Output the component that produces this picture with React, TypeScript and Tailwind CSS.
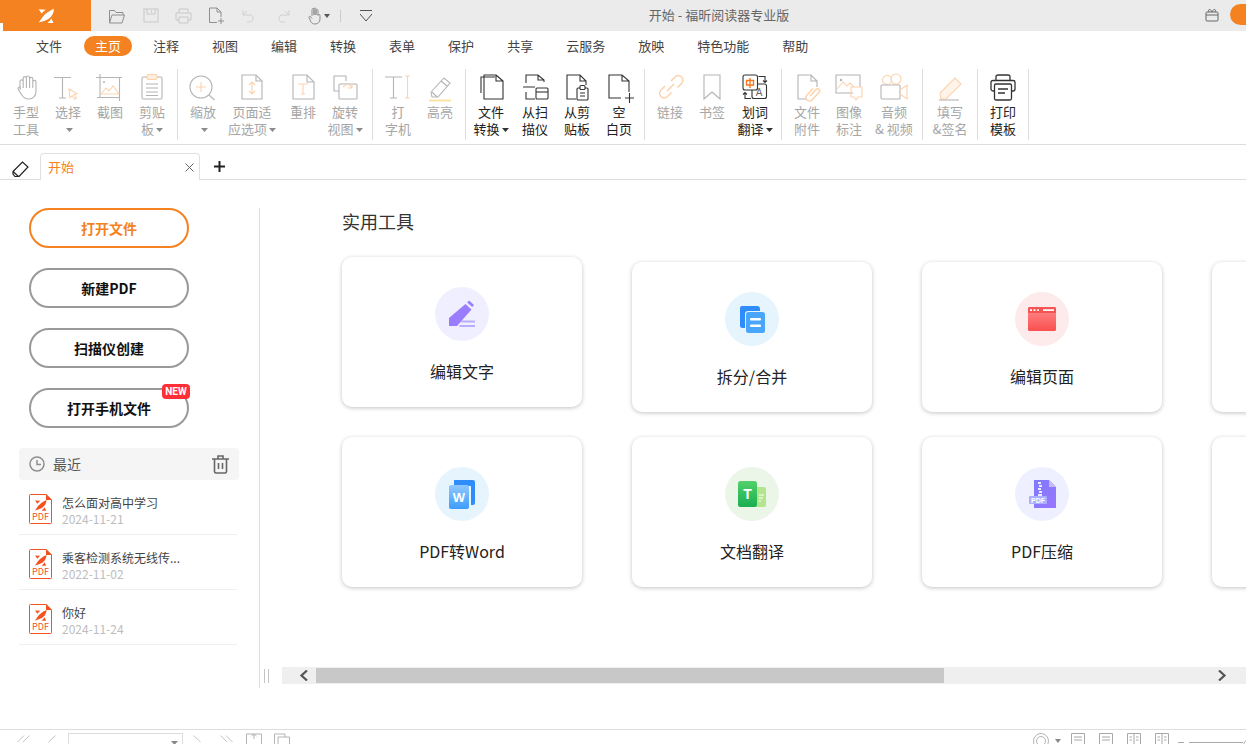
import React from "react";

const G = "#b4b4b4";
const O = "#fcd3ae";
const D = "#333333";

type SP = { children: React.ReactNode; w?: number; h?: number; vb?: string };
const S = ({ children, w = 28, h = 28, vb }: SP) => (
  <svg width={w} height={h} viewBox={vb || `0 0 ${w} ${h}`} fill="none" strokeWidth={1.1} className="overflow-visible shrink-0">
    {children}
  </svg>
);

const Fox = ({ fill = "#fff" }: { fill?: string }) => (
  <g fill={fill}>
    <path d="M.5 14.500C3.500 12.500 3.500 6.500 16 .8 15.500 8.500 11 12.500 .5 14.500Z" />
    <path d="M.8 1.200L7.800 1.800C6 3 4.800 4.200 3.700 5.800Z" />
    <path d="M9.500 14.900H15.500L13.400 10.400C12.500 12 11.200 13.500 9.500 14.900Z" />
  </g>
);

const Ic: Record<string, React.ReactNode> = {
  hand: (
    <S><path d="M8 16V8.500a1.600 1.600 0 0 1 3.200 0V5.200a1.600 1.600 0 0 1 3.200 0v-.6a1.600 1.600 0 0 1 3.200 0v1.400a1.600 1.600 0 0 1 3.200 0V9a1.600 1.600 0 0 1 3.200 0v9.500c0 4.400-3 7.500-7.200 7.500-3.400 0-5.200-1.200-7-4l-3.600-5.600c-1-1.800 1.200-3 2.400-1.600L8 16.500M11.200 8v7M14.400 5v10M17.600 5v10M20.800 8v7" stroke={G} /></S>
  ),
  select: (
    <S><path d="M0 4.500H17M8.500 4.500V25M5 25H12" stroke={G} /><path d="M15 16l8 4.500-3 1 2.500 3.500-2 1.200-2.200-3.500-2.300 2Z" stroke={O} /></S>
  ),
  shot: (
    <S><path d="M0 4.500H26M4 1V25M1 24.500H24M23.500 4V28" stroke={G} /><path d="M5 21l5-6 3 3 4-5 6 8M5 21H23" stroke={O} /><circle cx="8" cy="9" r="1" fill={G} /></S>
  ),
  clip: (
    <S><rect x="4" y="4" width="20" height="22" rx="1.500" stroke={G} /><rect x="9" y="1.500" width="10" height="5" rx="2" stroke={O} fill="#fdeedd" /><path d="M8 11H20M8 15H20M8 19H20M8 22.500H20" stroke={G} /></S>
  ),
  zoom: (
    <S><circle cx="12" cy="14" r="11" stroke={G} /><path d="M20 22l5.500 5" stroke={G} /><path d="M7 14H17M12 9V19" stroke={O} /></S>
  ),
  fit: (
    <S><path d="M4 2H18L24 8V26H4Z" stroke={G} /><path d="M18 2V8H24" stroke={G} /><path d="M14 9V21M11 12l3-3 3 3M11 18l3 3 3-3" stroke={O} /></S>
  ),
  reflow: (
    <S><path d="M4 2H18L25 9V26H4Z" stroke={G} /><path d="M18 2V9H25" stroke={G} /><path d="M9 11H19M14 11V21M12 21H16" stroke={O} /></S>
  ),
  rotate: (
    <S><path d="M15 8V3H3V18H8" stroke={G} /><rect x="8" y="11" width="18" height="15" rx="1" stroke={G} /><path d="M12 14c4-4 7-3 9 1M21 11v4h-4" stroke={O} /></S>
  ),
  type: (
    <S><path d="M1 4H18M9.500 4V25M6 25H13" stroke={G} /><path d="M21 3H26M23.500 3V25M21 25H26" stroke={O} /></S>
  ),
  mark: (
    <S><path d="M5 19L18 5l6 5-12 14H6Z" stroke={G} /><path d="M15 8l6 5" stroke={G} /><path d="M6 19l5 5" stroke={G} /><path d="M3 27.500H25" stroke="#fde2a4" strokeWidth={2} /></S>
  ),
  conv: (
    <S><path d="M4 20V4H18" stroke={D} fill="none" /><path d="M7 26V2H19L26 8V26ZM19 2V8H26" stroke={D} strokeLinejoin="round" /></S>
  ),
  scan: (
    <S><path d="M5 10V2H17L23 7V9M17 2V7H23M5 19V26H14M2 14H14" stroke={D} /><rect x="15" y="15" width="12" height="11" rx="1" stroke={D} /><path d="M15 19H27" stroke={D} /></S>
  ),
  paste: (
    <S><path d="M13 26H4V2H17L23 8V12M17 2V8H23" stroke={D} /><rect x="14" y="15" width="11" height="12" rx="1" stroke={D} /><rect x="17" y="12.500" width="5" height="4" rx="1" stroke={D} fill="#fff" /><path d="M17 20H22M17 23H22" stroke={D} /></S>
  ),
  blank: (
    <S><path d="M16 25H4V2H17L24 8V19M17 2V8H24" stroke={D} /><path d="M20 25H29M24.500 20V30" stroke={D} /></S>
  ),
  link: (
    <S><path d="M11 18L18 11M9 13l-4 4a4.500 4.500 0 0 0 6.500 6.500l4-4M15 8l4-4a4.500 4.500 0 0 1 6.500 6.500l-4 4" stroke={O} strokeWidth={1.600} /></S>
  ),
  book: (
    <S><path d="M6 2H22V26L14 19 6 26Z" stroke={G} /></S>
  ),
  trans: (
    <S>
      <rect x="11" y="11" width="14.500" height="14.500" rx="2" stroke={D} fill="#fff" />
      <rect x="2" y="2" width="14.500" height="15" rx="2" stroke={D} fill="#fff" />
      <path d="M5.500 7.500H12.500V12H5.500ZM9 5V15" stroke="#f5761a" strokeWidth={1.300} />
      <text x="18" y="23" textAnchor="middle" fontSize="10" fill="#666666" fontFamily="Liberation Sans, sans-serif">A</text>
      <path d="M17.500 3.500H24V9.500M22 7.500L24 9.500 26 7.500M10 25.500H4V19.500M2 21.500L4 19.500 6 21.500" stroke={D} />
    </S>
  ),
  attach: (
    <S><path d="M14 26H5V2H18L24 8V14M18 2V8H24" stroke={G} /><path d="M17 23l6-6.500a2 2 0 0 1 3 3l-7 7.500a3.500 3.500 0 0 1-5-5l6-6.500" stroke={O} strokeWidth={1.600} /></S>
  ),
  image: (
    <S><path d="M18 20H1V2H25V14" stroke={G} /><circle cx="6" cy="7" r="1.200" fill={G} /><path d="M2 16l6-7 4 4 3-3 4 4" stroke={O} /><path d="M16 14H27V24H23L21 27 19 24H16Z" stroke={O} /></S>
  ),
  video: (
    <S><circle cx="7" cy="7" r="4.500" stroke={O} /><circle cx="16" cy="6" r="5" stroke={O} /><rect x="1" y="12" width="19" height="14" rx="1" stroke={G} /><path d="M20 17l7-5V26l-7-5" stroke={O} /></S>
  ),
  sign: (
    <S><path d="M4 20L19 5l6 6L10 26H5Z" stroke={O} fill="#fff4ea" /><path d="M3 27H23" stroke={G} /></S>
  ),
  print: (
    <S><path d="M7 8V3.500C7 2.500 8 2 9 2H19C20 2 21 2.500 21 3.500V8" stroke={D} strokeWidth={1.300} /><path d="M7 18H4C3 18 2 17 2 16V9C2 8 3 7.500 4 7.500H24C25 7.500 26 8 26 9V16C26 17 25 18 24 18H21" stroke={D} strokeWidth={1.300} /><rect x="5.500" y="11" width="17" height="16" rx="1.500" stroke={D} strokeWidth={1.300} fill="#fff" /><path d="M9 16H19M9 20H16" stroke={D} strokeWidth={1.300} /></S>
  ),
};

const Caret = ({ c = "#8c8c8c" }: { c?: string }) => (
  <svg width="7" height="4" viewBox="0 0 7 4" className="inline-block ml-[2px] align-middle">
    <path d="M0 0H7L3.500 4Z" fill={c} />
  </svg>
);

const Item = ({ w, icon, a, b, dark, caret }: { w: string; icon: string; a: string; b?: string; dark?: boolean; caret?: boolean }) => (
  <div className={`${w} shrink-0 flex flex-col items-center pt-[12px] text-[13px] leading-[17px] whitespace-nowrap ${dark ? "text-[#222222]" : "text-[#a6a6a6]"}`}>
    <div className="h-[28px] mb-[2px]">{Ic[icon]}</div>
    <div>{a}</div>
    <div className="h-[17px]">
      {b}
      {caret && <Caret c={dark ? "#333333" : "#8c8c8c"} />}
    </div>
  </div>
);

const Sep = ({ ml }: { ml: string }) => <div className={`${ml} w-px h-[71px] mt-[8px] bg-[#dddddd] shrink-0`} />;

const Tool = ({ color, icon, label, lift }: { color: string; icon: React.ReactNode; label: string; lift?: boolean }) => (
  <div className={`h-[150px] bg-white rounded-[10px] shadow-[0_1px_4px_rgba(0,0,0,0.24)] flex flex-col items-center pt-[30px] ${lift ? "-translate-y-[5px]" : ""}`}>
    <div className={`${color} w-[54px] h-[54px] rounded-full flex items-center justify-center`}>{icon}</div>
    <div className="mt-[18px] text-[16px] leading-[24px] text-[#222222]">{label}</div>
  </div>
);

const FileRow = ({ name, date }: { name: string; date: string }) => (
  <div className="w-[218px] h-[55px] ml-[19px] pl-[10px] pt-[14px] border-b border-[#eeeeee] flex gap-[10px]">
    <div className="relative w-[23px] h-[30px] shrink-0">
      <svg width="23" height="30" viewBox="0 0 23 30" fill="none">
        <path d="M1.500.5H17L22.500 6V28.500a1 1 0 0 1-1 1H1.500a1 1 0 0 1-1-1V1.500a1 1 0 0 1 1-1Z" stroke="#f4511e" />
        <path d="M17 0L23 6H17Z" fill="#f4511e" />
        <g transform="translate(5.500 5.500) scale(.75)"><Fox fill="#f4511e" /></g>
      </svg>
      <span className="absolute left-0 right-0 top-[17px] text-center text-[9px] leading-[11px] text-[#f4511e]">PDF</span>
    </div>
    <div>
      <div className="text-[12px] leading-[17px] text-[#444444] whitespace-nowrap">{name}</div>
      <div className="text-[12px] leading-[15px] text-[#bdbdbd]">{date}</div>
    </div>
  </div>
);

const PillBtn = ({ label, active, children }: { label: string; active?: boolean; children?: React.ReactNode }) => (
  <div className={`relative w-[160px] h-[40px] rounded-full border-2 flex items-center justify-center text-[14px] font-bold ${active ? "border-[#f58220] text-[#f58220]" : "border-[#999999] text-[#111111]"}`}>
    {label}
    {children}
  </div>
);

const TitleIcons = () => (
  <div className="flex items-center h-full text-[#9a9a9a]">
    <svg width="18" height="16" viewBox="0 0 18 16" fill="none" stroke="#8e8e8e" className="ml-[17px]"><path d="M1.500 15V2.500h5l1.500 2h7V7M1.500 15h12.500l2.500-8H4Z" /></svg>
    <svg width="16" height="15" viewBox="0 0 16 15" fill="none" stroke="#c8c8c8" className="ml-[17px]"><rect x="1" y="1" width="14" height="13" /><path d="M4 1V6H12V1M8.500 2.500V4.500" /></svg>
    <svg width="17" height="16" viewBox="0 0 17 16" fill="none" stroke="#c8c8c8" className="ml-[16px]"><path d="M4 5V1H13V5M4 12H1V5H16V12H13M4 9H13V15H4Z" /></svg>
    <svg width="17" height="17" viewBox="0 0 17 17" fill="none" stroke="#8e8e8e" className="ml-[16px]"><path d="M9 15.500H1.500V1H9L13 5V10M9 1V5H13M10 14H16M13 11V17" /></svg>
    <svg width="14" height="14" viewBox="0 0 14 14" fill="none" stroke="#d0d0d0" className="ml-[17px]"><path d="M1 1V6H9A4 4 0 0 1 9 13H5M1 6l4-4" /></svg>
    <svg width="14" height="14" viewBox="0 0 14 14" fill="none" stroke="#d0d0d0" className="ml-[20px]"><path d="M13 1V6H5A4 4 0 0 0 5 13H9M13 6L9 2" /></svg>
    <svg width="14" height="18" viewBox="0 0 14 18" fill="none" stroke="#8e8e8e" className="ml-[18px]"><path d="M4 9V2.500a1 1 0 0 1 2 0V8V2a1 1 0 0 1 2 0v6-4.500a1 1 0 0 1 2 0V8.500a1 1 0 0 1 2 0V12c0 3-2 5-5 5-2.500 0-3.500-1-4.500-3L1 10.500c-.5-1 .8-1.800 1.600-.8L4 11.500" /></svg>
    <svg width="6" height="4" viewBox="0 0 6 4" className="ml-[2px]"><path d="M0 0H6L3 4Z" fill="#555555" /></svg>
    <div className="ml-[10px] w-px h-[12px] bg-[#cccccc]" />
    <svg width="14" height="12" viewBox="0 0 14 12" fill="none" stroke="#555555" className="ml-[18px]"><path d="M1 .5H13M1 4l6 7 6-7" /></svg>
  </div>
);

export default function App() {
  const menu = ["注释", "视图", "编辑", "转换", "表单", "保护", "共享", "云服务", "放映", "特色功能", "帮助"];
  return (
    <div className="w-[1246px] h-[744px] overflow-hidden bg-white flex flex-col font-['Noto_Sans_CJK_SC',sans-serif]">
      {/* title bar */}
      <div className="relative h-[31px] shrink-0 bg-[#ebebeb] flex">
        <div className="relative w-[91px] bg-[#f58220] flex items-center pl-[38px]">
          <div className="absolute left-0 bottom-0 w-[3px] h-[8px] bg-white" />
          <svg width="16" height="15" viewBox="0 0 16 15"><Fox /></svg>
        </div>
        <TitleIcons />
        <div className="flex-1 text-center text-[13px] leading-[29px] text-[#666666] pr-[140px]">开始 - 福昕阅读器专业版</div>
        <svg width="14" height="14" viewBox="0 0 14 14" fill="none" stroke="#666666" className="mt-[8px] mr-[11px]"><rect x="1" y="4" width="12" height="9" rx="1" /><path d="M1 7H13M4 4C2 1 6 .5 7 4 8 .5 12 1 10 4" /></svg>
        <div className="w-[16px] h-[21px] mt-[4px] rounded-l-full bg-[#f58220]" />
      </div>

      {/* menu */}
      <div className="h-[30px] shrink-0 flex items-center pl-[36px] gap-[33px] text-[13px] text-[#444444] whitespace-nowrap">
        <span>文件</span>
        <span className="-ml-[11px] -mr-[12px] px-[11px] h-[20px] leading-[19px] rounded-full bg-[#f58220] text-white">主页</span>
        {menu.map((m) => (
          <span key={m}>{m}</span>
        ))}
      </div>

      {/* ribbon */}
      <div className="h-[84px] shrink-0 border-b border-[#dddddd] flex pl-[5px]">
        <Item w="w-[42px]" icon="hand" a="手型" b="工具" />
        <Item w="w-[42px]" icon="select" a="选择" caret />
        <Item w="w-[42px]" icon="shot" a="截图" />
        <Item w="w-[42px]" icon="clip" a="剪贴" b="板" caret />
        <Sep ml="ml-[4px]" />
        <Item w="w-[50px]" icon="zoom" a="缩放" caret />
        <Item w="w-[48px]" icon="fit" a="页面适" b="应选项" caret />
        <Item w="w-[54px]" icon="reflow" a="重排" />
        <Item w="w-[30px]" icon="rotate" a="旋转" b="视图" caret />
        <Sep ml="ml-[12px]" />
        <Item w="w-[50px]" icon="type" a="打" b="字机" />
        <Item w="w-[34px]" icon="mark" a="高亮" />
        <Sep ml="ml-[8px]" />
        <Item w="w-[50px]" icon="conv" a="文件" b="转换" caret dark />
        <Item w="w-[38px]" icon="scan" a="从扫" b="描仪" dark />
        <Item w="w-[46px]" icon="paste" a="从剪" b="贴板" dark />
        <Item w="w-[38px]" icon="blank" a="空" b="白页" dark />
        <Sep ml="ml-[6px]" />
        <Item w="w-[50px]" icon="link" a="链接" />
        <Item w="w-[34px]" icon="book" a="书签" />
        <Item w="w-[52px]" icon="trans" a="划词" b="翻译" caret dark />
        <Sep ml="ml-0" />
        <Item w="w-[50px]" icon="attach" a="文件" b="附件" />
        <Item w="w-[34px]" icon="image" a="图像" b="标注" />
        <Item w="w-[56px]" icon="video" a="音频" b="& 视频" />
        <Sep ml="ml-0" />
        <Item w="w-[54px]" icon="sign" a="填写" b="&签名" />
        <Sep ml="ml-0" />
        <Item w="w-[50px]" icon="print" a="打印" b="模板" dark />
        <Sep ml="ml-0" />
      </div>

      {/* tabs */}
      <div className="h-[35px] shrink-0 border-b border-[#dddddd] flex items-end">
        <svg width="17" height="16" viewBox="0 0 17 16" fill="none" stroke="#222222" className="ml-[12px] mb-[2px]"><path d="M1 10.500L10.500 1 16 6l-9 9.500H3L1 13ZM1 10.500l5.500 5" strokeWidth="1.200" /></svg>
        <div className="ml-[11px] w-[160px] h-[27px] -mb-px border border-b-0 border-[#e0e0e0] rounded-t-[4px] bg-white flex items-center pl-[7px] pr-[5px] justify-between text-[13px] text-[#f58220]">
          <span>开始</span>
          <svg width="9" height="9" viewBox="0 0 9 9" stroke="#666666"><path d="M.5.500L8.500 8.500M8.500.500L.5 8.500" /></svg>
        </div>
        <svg width="11" height="11" viewBox="0 0 11 11" stroke="#222222" strokeWidth="2" className="ml-[14px] mb-[7px]"><path d="M5.500 0V11M0 5.500H11" /></svg>
      </div>

      {/* main */}
      <div className="flex-1 min-h-0 pt-[28px] flex items-start">
        <div className="w-[260px] h-[480px] shrink-0 border-r border-[#dddddd]">
          <div className="pl-[29px] flex flex-col gap-[20px]">
            <PillBtn label="打开文件" active />
            <PillBtn label="新建PDF" />
            <PillBtn label="扫描仪创建" />
            <PillBtn label="打开手机文件">
              <span className="absolute -top-[6px] -right-[3px] w-[28px] h-[15px] rounded-[4px] bg-[#ff2f38] text-white text-[10px] leading-[15px] text-center font-bold font-['Roboto',sans-serif]">NEW</span>
            </PillBtn>
          </div>
          <div className="mt-[20px] ml-[19px] w-[220px] h-[32px] bg-[#f5f5f5] rounded-[4px] flex items-center pl-[10px] pr-[10px] text-[14px] text-[#555555]">
            <svg width="16" height="16" viewBox="0 0 16 16" fill="none" stroke="#8f8f8f" strokeWidth="1.500"><circle cx="8" cy="8" r="7" /><path d="M8 4V8.500H12" /></svg>
            <span className="ml-[8px] flex-1">最近</span>
            <svg width="17" height="19" viewBox="0 0 17 19" fill="none" stroke="#666666" strokeWidth="1.600"><path d="M0 4H17M6 4V1H11V4M2.500 4V16.500a1.500 1.500 0 0 0 1.500 1.500H13a1.500 1.500 0 0 0 1.500-1.500V4M6.500 8V14M10.500 8V14" /></svg>
          </div>
          <FileRow name="怎么面对高中学习" date="2024-11-21" />
          <FileRow name="乘客检测系统无线传..." date="2022-11-02" />
          <FileRow name="你好" date="2024-11-24" />
        </div>

        <div className="flex-1 min-w-0 h-[480px] flex flex-col">
          <div className="flex-1 min-h-0 overflow-hidden pl-[82px]">
            <div className="h-[24px] text-[18px] leading-[26px] text-[#333333]">实用工具</div>
            <div className="mt-[30px] grid grid-cols-[repeat(4,240px)] gap-x-[50px] gap-y-[25px]">
              <Tool lift label="编辑文字" color="bg-[#efefff]" icon={
                <svg width="28" height="28" viewBox="0 0 28 28"><path d="M21 .5l5 4.500-1.800 2-5-4.500Z" fill="#9a7cff" /><path d="M17.500 4L23.500 9.500 9 26H1V18Z" fill="#9a7cff" /><path d="M14 20.500H27V22.500H12.500ZM11.500 25H27V27H11.500Z" fill="#b9adff" /></svg>
              } />
              <Tool label="拆分/合并" color="bg-[#e5f4fd]" icon={
                <svg width="26" height="28" viewBox="0 0 26 28"><path d="M3 1H18a3 3 0 0 1 3 3V6H9a3 3 0 0 0-3 3V23H3.500A2.500 2.500 0 0 1 1 20.500V3a2 2 0 0 1 2-2Z" fill="#2f8dfb" /><rect x="7" y="7" width="19" height="21" rx="2.500" fill="#4aa6fb" /><rect x="11" y="13" width="11" height="2.500" rx="1" fill="#fff" /><rect x="11" y="19.500" width="11" height="2.500" rx="1" fill="#fff" /></svg>
              } />
              <Tool label="编辑页面" color="bg-[#fdeaea]" icon={
                <svg width="28" height="24" viewBox="0 0 28 24"><defs><linearGradient id="pg" x1="0" y1="0" x2="0" y2="1"><stop offset="0" stopColor="#ff8b8b" /><stop offset="1" stopColor="#f9504f" /></linearGradient></defs><rect width="28" height="24" rx="1.500" fill="url(#pg)" /><path d="M1.500 0H26.500A1.500 1.500 0 0 1 28 1.500V6H0V1.500A1.500 1.500 0 0 1 1.500 0Z" fill="#f65353" /><path d="M2 2.200H4V4H2ZM5.500 2.200H7.500V4H5.500ZM9 2.200H11V4H9ZM15 2.200H26V4H15Z" fill="#fff" /></svg>
              } />
              <div className="h-[150px] bg-white rounded-[10px] shadow-[0_1px_4px_rgba(0,0,0,0.24)]" />
              <Tool label="PDF转Word" color="bg-[#e5f4fd]" icon={
                <svg width="26" height="30" viewBox="0 0 26 30"><path d="M5 1H24a2 2 0 0 1 2 2V24a2 2 0 0 1-2 2H22V7H5Z" fill="#2f8dfb" /><defs><linearGradient id="wd" x1="0" y1="0" x2="0" y2="1"><stop offset="0" stopColor="#8fc8fd" /><stop offset="1" stopColor="#3d9dfb" /></linearGradient></defs><rect y="6" width="20" height="24" rx="2" fill="url(#wd)" /><text x="10" y="22.500" textAnchor="middle" fontSize="13" fontWeight="700" fill="#fff" fontFamily="Liberation Sans, sans-serif">W</text></svg>
              } />
              <Tool label="文档翻译" color="bg-[#ebf6e9]" icon={
                <svg width="28" height="27" viewBox="0 0 28 27"><rect x="17" y="6" width="11" height="20" rx="2" fill="#b3e58e" /><path d="M21 14H26M21 17H25M21 20H23" stroke="#fff" /><defs><linearGradient id="tr" x1="0" y1="0" x2="0" y2="1"><stop offset="0" stopColor="#53d169" /><stop offset="1" stopColor="#18ae52" /></linearGradient></defs><rect width="19" height="26" rx="2.500" fill="url(#tr)" /><text x="9.500" y="18" textAnchor="middle" fontSize="14" fontWeight="700" fill="#fff" fontFamily="Liberation Sans, sans-serif">T</text></svg>
              } />
              <Tool label="PDF压缩" color="bg-[#eef0ff]" icon={
                <svg width="27" height="28" viewBox="0 0 27 28"><defs><linearGradient id="zp" x1="0" y1="0" x2="1" y2="1"><stop offset="0" stopColor="#7d7bff" /><stop offset="1" stopColor="#9a75ff" /></linearGradient></defs><path d="M5 0H20L27 7V28H5Z" fill="url(#zp)" /><path d="M20 0L27 7H20Z" fill="#c2bcff" /><path d="M9 2H12V4H9ZM10 5H13V7H10ZM9 8H12V10H9ZM10 11H13V13H10ZM9 14H13V18H9Z" fill="#fff" opacity=".85" /><rect y="16" width="18" height="8" rx="1" fill="#aab0ff" /><text x="9" y="22.600" textAnchor="middle" fontSize="7" fontWeight="700" fill="#fff" fontFamily="Liberation Sans, sans-serif">PDF</text></svg>
              } />
              <div className="h-[150px] bg-white rounded-[10px] shadow-[0_1px_4px_rgba(0,0,0,0.24)]" />
            </div>
          </div>
          <div className="h-[17px] mb-[4px] shrink-0 flex items-center pl-[4px]">
            <div className="w-[5px] h-[14px] border-x border-[#c4c4c4] shrink-0" />
            <div className="ml-[13px] flex-1 h-[17px] bg-[#efefef] flex items-center">
              <svg width="10" height="11" viewBox="0 0 10 11" fill="none" stroke="#555555" strokeWidth="2.200" className="ml-[17px]"><path d="M8 .5L2.500 5.500 8 10.500" /></svg>
              <div className="ml-[7px] w-[628px] h-[15px] bg-[#c8c8c8]" />
              <svg width="10" height="11" viewBox="0 0 10 11" fill="none" stroke="#555555" strokeWidth="2.200" className="ml-[273px]"><path d="M2 .5L7.500 5.500 2 10.500" /></svg>
            </div>
          </div>
        </div>
      </div>

      {/* status bar */}
      <div className="h-[15px] shrink-0 border-t border-[#dddddd] overflow-hidden flex items-start pt-[3px]">
        <svg width="14" height="12" viewBox="0 0 14 12" fill="none" stroke="#c4c4c4" className="ml-[17px] mt-[2px]"><path d="M7 .5L.5 7M12.500 .5L6 7" /></svg>
        <svg width="8" height="12" viewBox="0 0 8 12" fill="none" stroke="#c4c4c4" className="ml-[17px] mt-[2px]"><path d="M7.500 .5L.5 7" /></svg>
        <div className="ml-[12px] w-[115px] h-[20px] border border-[#dddddd] flex justify-end pt-[7px] pr-[3px]">
          <svg width="7" height="4" viewBox="0 0 7 4" className="mr-[1px]"><path d="M0 0H7L3.500 4Z" fill="#888888" /></svg>
        </div>
        <svg width="8" height="12" viewBox="0 0 8 12" fill="none" stroke="#c4c4c4" className="ml-[10px] mt-[2px]"><path d="M.5 .5L7.500 7" /></svg>
        <svg width="13" height="12" viewBox="0 0 13 12" fill="none" stroke="#c4c4c4" className="ml-[19px] mt-[2px]"><path d="M.5 .5L7 7M6 .5L12.500 7" /></svg>
        <svg width="16" height="12" viewBox="0 0 16 12" fill="none" stroke="#b4b4b4" className="ml-[13px]"><path d="M.5 12V1H15.500V12M8 1V6M5.500 3L8 1l2.500 2" /></svg>
        <svg width="16" height="12" viewBox="0 0 16 12" fill="none" stroke="#b4b4b4" className="ml-[12px]"><path d="M.5 12V1H11V4M4 12V4H15.500V12" /></svg>
        <div className="flex-1" />
        <svg width="16" height="12" viewBox="0 0 16 12" fill="none" stroke="#b4b4b4"><circle cx="8" cy="8" r="7.500" /><circle cx="8" cy="8" r="4.500" /></svg>
        <svg width="6" height="4" viewBox="0 0 6 4" className="ml-[6px] mt-[6px]"><path d="M0 0H6L3 4Z" fill="#888888" /></svg>
        <svg width="14" height="12" viewBox="0 0 14 12" fill="none" stroke="#a8a8a8" className="ml-[10px]"><path d="M.5 12V.5H13.500V12M3 4H11M3 7H11" /></svg>
        <svg width="14" height="12" viewBox="0 0 14 12" fill="none" stroke="#a8a8a8" className="ml-[14px]"><path d="M.5 12V.5H13.500V12M3 4H11M3 7H11" /></svg>
        <svg width="14" height="12" viewBox="0 0 14 12" fill="none" stroke="#a8a8a8" className="ml-[14px]"><path d="M.5 12V.5H13.500V12M7 .5V12M2.500 4H5M9 4H11.500M2.500 7H5M9 7H11.500" /></svg>
        <svg width="14" height="12" viewBox="0 0 14 12" fill="none" stroke="#a8a8a8" className="ml-[14px]"><path d="M.5 12V.5H13.500V12M7 .5V12M2.500 4H5M9 4H11.500M2.500 7H5M9 7H11.500" /></svg>
        <div className="ml-[9px] w-[6px] h-px mt-[9px] bg-[#aaaaaa]" />
        <div className="ml-[5px] w-[54px] h-px mt-[9px] bg-[#aaaaaa]" />
        <div className="w-[13px] h-[13px] mt-[6px] -mr-[10px] rounded-full border border-[#aaaaaa]" />
      </div>
    </div>
  );
}
